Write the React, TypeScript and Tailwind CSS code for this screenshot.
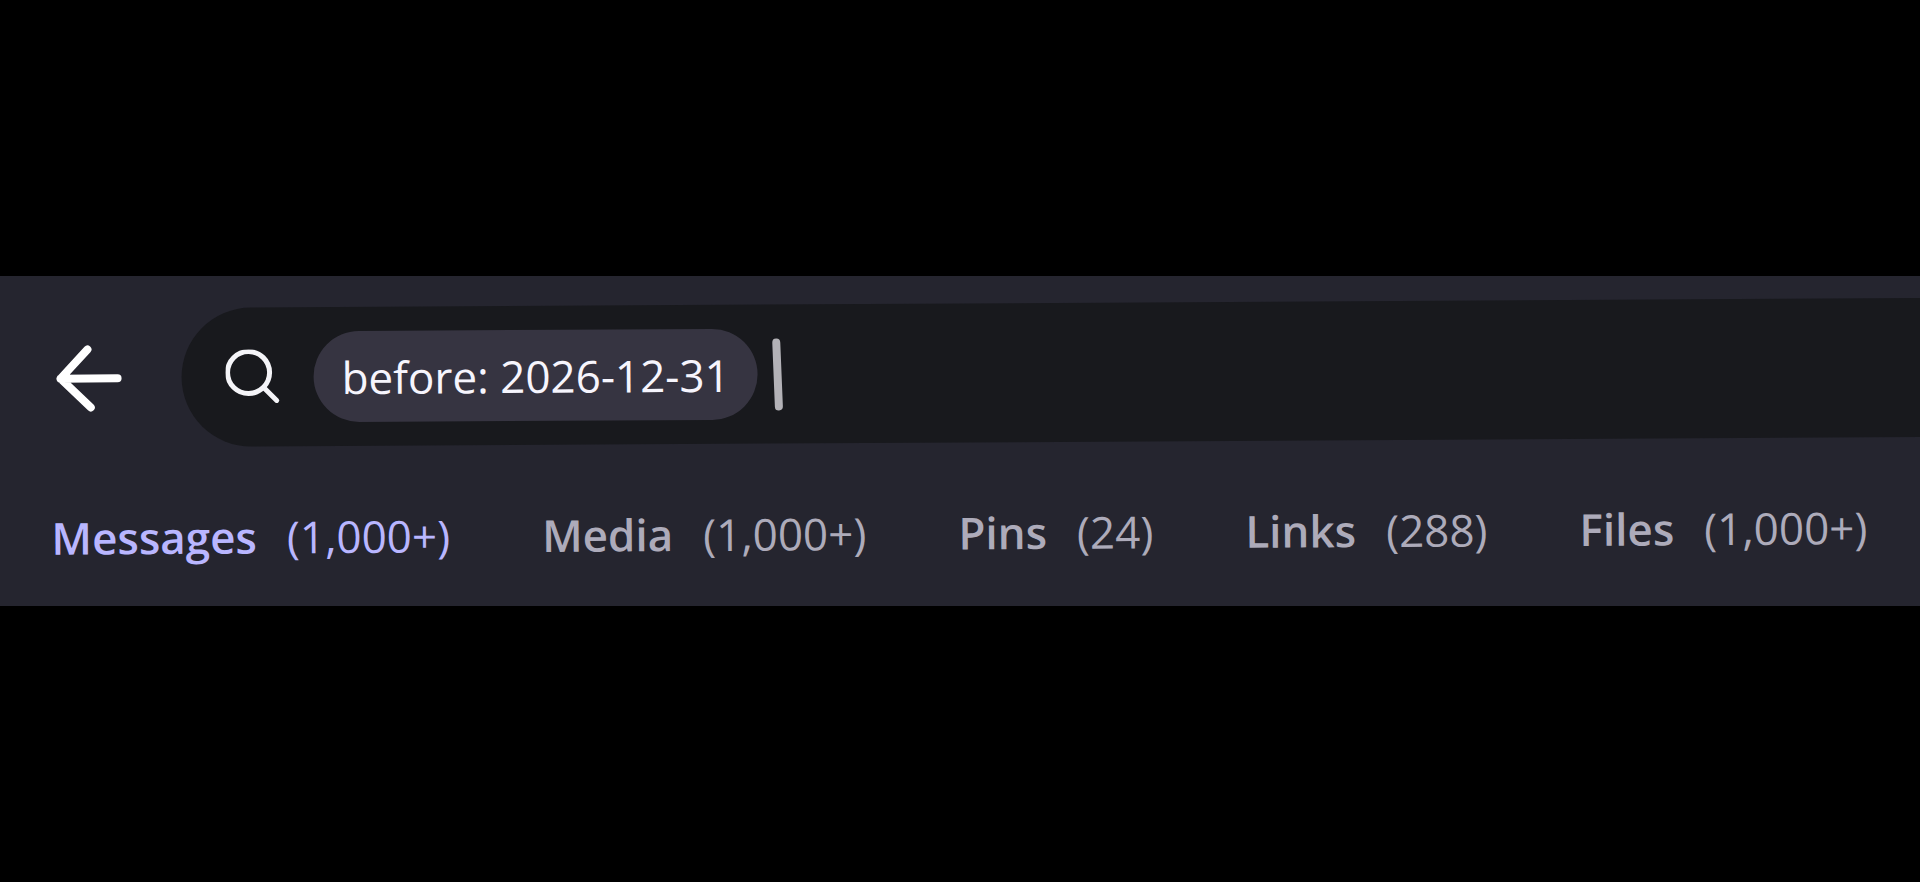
import { useState } from "react";

const tabs = [
  { name: "Messages", count: "1,000+" },
  { name: "Media", count: "1,000+" },
  { name: "Pins", count: "24" },
  { name: "Links", count: "288" },
  { name: "Files", count: "1,000+" },
];

function BackIcon() {
  return (
    <svg
      className="w-[68px] h-[68px]"
      viewBox="0 0 68 68"
      fill="none"
      stroke="currentColor"
      strokeWidth="8"
      strokeLinecap="round"
      strokeLinejoin="round"
    >
      <path d="M32 5 5 34l30 29M5 34h57" />
    </svg>
  );
}

function SearchIcon() {
  return (
    <svg
      className="w-14 h-14 shrink-0 text-[#f4f4f8]"
      viewBox="0 0 56 56"
      fill="none"
      stroke="currentColor"
      strokeWidth="5"
      strokeLinecap="round"
    >
      <circle cx="23" cy="23" r="21" />
      <path d="m38 38 13 13" />
    </svg>
  );
}

function SearchBar() {
  return (
    <div className="flex flex-row items-center h-[139px] flex-1 pl-11 bg-[#18191d] rounded-l-full">
      <SearchIcon />
      <button className="flex items-center h-[91px] ml-8 px-7 shrink-0 rounded-full bg-[#363441] text-[#f6f5fd] whitespace-nowrap cursor-pointer">
        before: 2026-12-31
      </button>
      <span className="w-2 h-[72px] ml-4 shrink-0 rounded-sm bg-[#b3b2b7] -rotate-2" />
      <input
        type="text"
        aria-label="Search"
        className="flex-1 min-w-0 h-20 bg-transparent text-[#f6f5fd] outline-none"
      />
    </div>
  );
}

function App() {
  const [active, setActive] = useState("Messages");

  return (
    <main className="min-h-screen flex flex-col justify-center bg-black font-['Open_Sans',sans-serif] text-[44px] leading-[60px]">
      <section className="w-full overflow-hidden bg-[#25252f]">
        <div className="-mr-4 pt-[33px] pb-[38px] origin-top-left rotate-[-0.33deg]">
          <header className="flex flex-row items-center gap-[58px] pl-[55px]">
            <button aria-label="Back" className="text-white cursor-pointer">
              <BackIcon />
            </button>
            <SearchBar />
          </header>

          <nav
            role="tablist"
            className="flex flex-row items-center gap-[92px] mt-15 pl-[50px] whitespace-nowrap"
          >
            {tabs.map((tab) => (
              <button
                key={tab.name}
                role="tab"
                aria-selected={active === tab.name}
                onClick={() => setActive(tab.name)}
                className={`flex flex-row gap-[30px] cursor-pointer ${
                  active === tab.name ? "text-[#b9b6ff]" : "text-[#adabba]"
                }`}
              >
                <span className="font-semibold">{tab.name}</span>
                <span>({tab.count})</span>
              </button>
            ))}
          </nav>
        </div>
      </section>
    </main>
  );
}

export default App;
